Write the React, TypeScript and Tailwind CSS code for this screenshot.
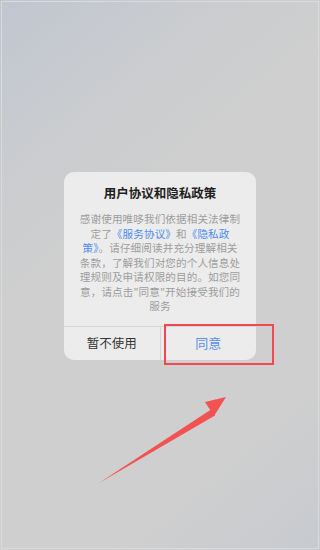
import React from "react";

export default function App() {
  const lines: React.ReactNode[] = [
    "感谢使用唯哆我们依据相关法律制",
    <>定了<span className="text-[#4f8cf0]">《服务协议》</span>和<span className="text-[#4f8cf0]">《隐私政</span></>,
    <><span className="text-[#4f8cf0]">策》</span>。请仔细阅读并充分理解相关</>,
    "条款，了解我们对您的个人信息处",
    "理规则及申请权限的目的。如您同",
    "意，请点击\"同意\"开始接受我们的",
    "服务",
  ];
  return (
    <div
      className="relative w-[320px] h-[550px] overflow-hidden bg-[linear-gradient(140deg,#c0c6d0_0%,#cacccf_22%,#cfcfcf_40%,#cfcfcf_78%,#c7cacf_100%)]"
      style={{ fontFamily: '"Noto Sans CJK SC", "Noto Sans", sans-serif' }}
    >
      <div className="absolute inset-[1px] border border-[#dadada] pointer-events-none" />
      <div className="flex flex-col items-center pt-[172px]">
        <div className="w-[192px] rounded-[10px] bg-[#ececec] flex flex-col">
          <div className="pt-[12px] text-center text-[12.5px] leading-[18px] font-bold text-[#1f1f1f]">
            用户协议和隐私政策
          </div>
          <div className="mt-[10px] pb-[12px] text-center text-[10.6px] leading-[14.5px] text-[#9d9d9d] tracking-[0.1px]">
            {lines.map((l, i) => (
              <div key={i} className="whitespace-nowrap">{l}</div>
            ))}
          </div>
          <div className="border-t border-[#d6d6d6] flex h-[34px]">
            <div className="flex-1 flex items-center justify-center text-[12.5px] text-[#333] border-r border-[#d6d6d6]">
              暂不使用
            </div>
            <div className="flex-1 flex items-center justify-center text-[13px] text-[#5b8ff0]">
              同意
            </div>
          </div>
        </div>
      </div>
      <div className="absolute left-[164px] top-[324px] w-[110px] h-[41px] border-[2.5px] border-[#f04a4f]" />
      <svg className="absolute left-0 top-0" width="320" height="550" viewBox="0 0 320 550">
        <polygon points="99,483 211,409.5 215,415.5" fill="#f25252" />
        <polygon points="226,397 205,402 214,416" fill="#f25252" />
      </svg>
    </div>
  );
}
